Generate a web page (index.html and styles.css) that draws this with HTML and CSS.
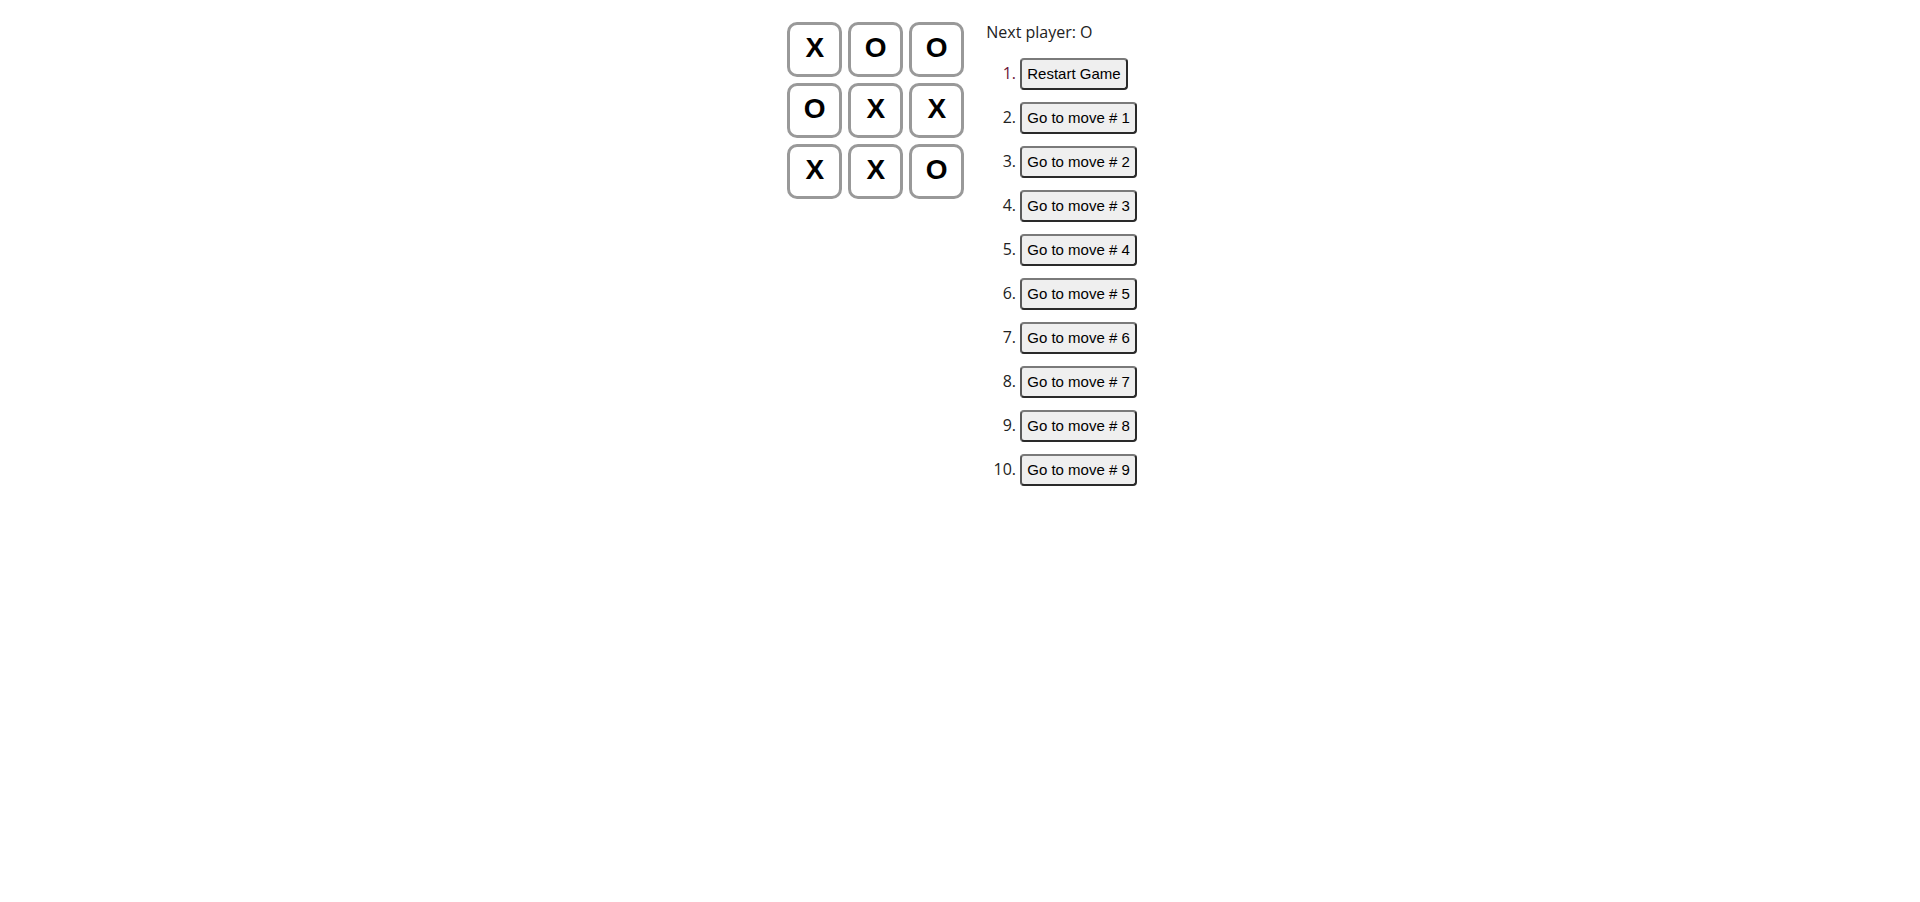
FILE: index.html
```html
<!DOCTYPE html>
<html lang="en">
<head>
<meta charset="utf-8">
<title>Tic-Tac-Toe</title>
<link rel="stylesheet" href="styles.css">
</head>
<body>
<div class="game">
  <div class="game-board">
    <div class="board-row">
      <div class="square">X</div>
      <div class="square">O</div>
      <div class="square">O</div>
    </div>
    <div class="board-row">
      <div class="square">O</div>
      <div class="square">X</div>
      <div class="square">X</div>
    </div>
    <div class="board-row">
      <div class="square">X</div>
      <div class="square">X</div>
      <div class="square">O</div>
    </div>
  </div>
  <div class="game-info">
    <div class="status">Next player: O</div>
    <ol class="moves">
      <li class="move move-first"><button class="move-btn">Restart Game</button></li>
      <li class="move"><button class="move-btn">Go to move # 1</button></li>
      <li class="move"><button class="move-btn">Go to move # 2</button></li>
      <li class="move"><button class="move-btn">Go to move # 3</button></li>
      <li class="move"><button class="move-btn">Go to move # 4</button></li>
      <li class="move"><button class="move-btn">Go to move # 5</button></li>
      <li class="move"><button class="move-btn">Go to move # 6</button></li>
      <li class="move"><button class="move-btn">Go to move # 7</button></li>
      <li class="move"><button class="move-btn">Go to move # 8</button></li>
      <li class="move"><button class="move-btn">Go to move # 9</button></li>
    </ol>
  </div>
</div>
</body>
</html>
```

FILE: styles.css
```css
html, body {
  background: #ffffff;
}

body {
  margin: 8px;
  font-family: "Open Sans", "DejaVu Sans", sans-serif;
  font-size: 16px;
  color: #222222;
}

.game {
  display: flex;
  flex-direction: row;
  justify-content: center;
  align-items: flex-start;
  padding-top: 11px;
}

.game-board {
  margin-left: 1px;
}

.board-row {
  display: flex;
}

.square {
  box-sizing: border-box;
  width: 55px;
  height: 55px;
  margin: 3px;
  border: 3px solid #999999;
  border-radius: 10px;
  background: #ffffff;
  font-family: "Liberation Sans", Arial, sans-serif;
  font-weight: bold;
  font-size: 28px;
  line-height: 46px;
  text-align: center;
  color: #000000;
}

.game-info {
  margin-left: 19px;
  padding-top: 3px;
}

.status {
  line-height: 20px;
  height: 20px;
}

.moves {
  margin: 16px 0 0 0;
  padding-left: 34px;
}

.move {
  margin-bottom: 12px;
  line-height: 20px;
}

.move::marker {
  color: #222222;
}

.move-first::marker {
  color: #6b1236;
}

.move-btn {
  font-family: "Liberation Sans", Arial, sans-serif;
  font-size: 15px;
  line-height: 18px;
  padding: 5px 5px;
  margin: 0;
  background: #efefef;
  color: #000000;
  border: 2px solid;
  border-color: #7a7a7a #2a2a2a #2a2a2a #5a5a5a;
  border-radius: 4px;
}
```
